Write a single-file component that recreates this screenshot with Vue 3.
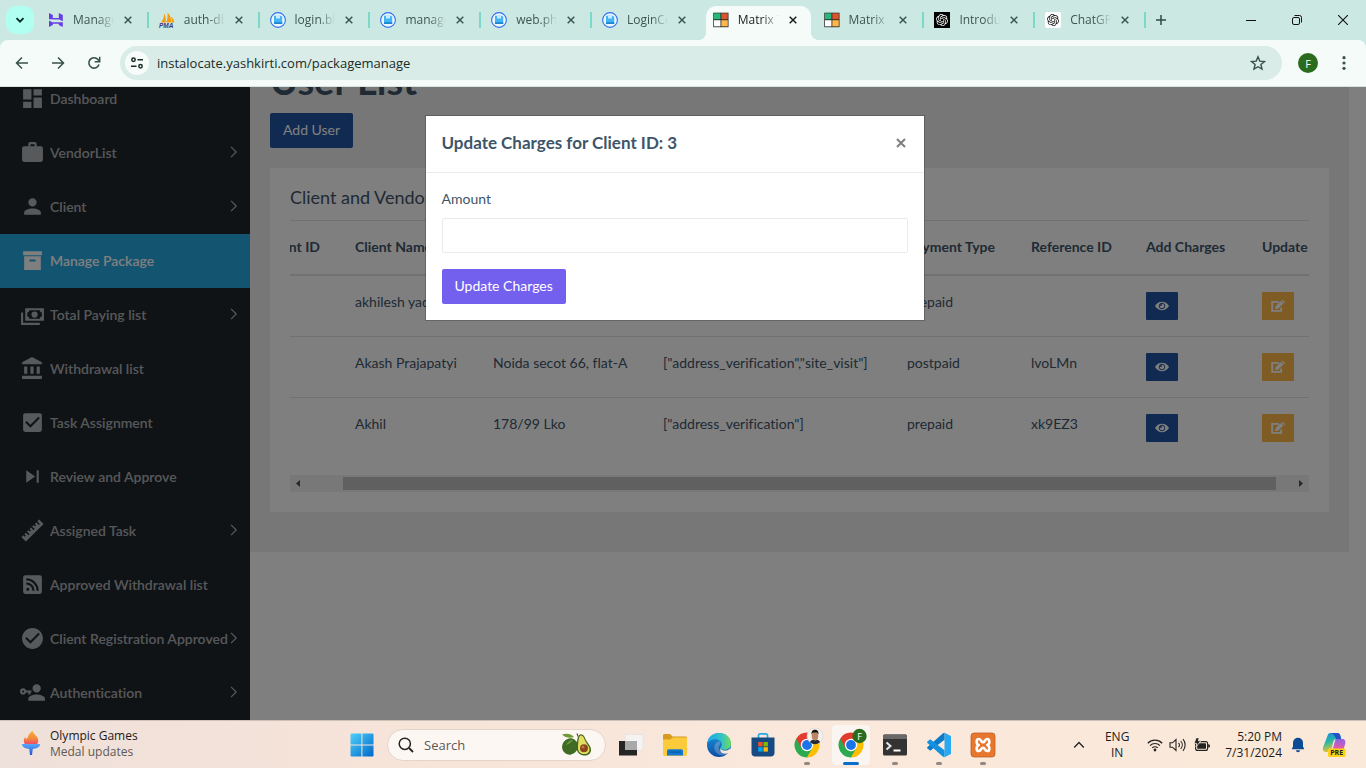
<script setup>
import { ref, onMounted } from 'vue'

const tabs = [
  { title: 'Manage Package', icon: 'hostinger' },
  { title: 'auth-db1 / localhost', icon: 'pma' },
  { title: 'login.blade.php', icon: 'disk' },
  { title: 'manage.blade.php', icon: 'disk' },
  { title: 'web.php - Files', icon: 'disk' },
  { title: 'LoginController', icon: 'disk' },
  { title: 'Matrix Template', icon: 'matrix', active: true },
  { title: 'Matrix Template', icon: 'matrix' },
  { title: 'Introduction', icon: 'openai-dark' },
  { title: 'ChatGPT', icon: 'openai' }
]

const menu = [
  { label: 'Dashboard', d: 'M13,3V9H21V3M13,21H21V11H13M3,21H11V15H3M3,13H11V3H3V13Z' },
  { label: 'VendorList', sub: true, d: 'M10,2H14A2,2 0 0,1 16,4V6H20A2,2 0 0,1 22,8V19A2,2 0 0,1 20,21H4C2.89,21 2,20.1 2,19V8C2,6.89 2.89,6 4,6H8V4C8,2.89 8.89,2 10,2M14,6V4H10V6H14Z' },
  { label: 'Client', sub: true, d: 'M12,4A4,4 0 0,1 16,8A4,4 0 0,1 12,12A4,4 0 0,1 8,8A4,4 0 0,1 12,4M12,14C16.42,14 20,15.79 20,18V20H4V18C4,15.79 7.58,14 12,14Z' },
  { label: 'Manage Package', active: true, d: 'M3,3H21V7H3V3M4,8H20V21H4V8M9.5,11A0.5,0.5 0 0,0 9,11.5V13H15V11.5A0.5,0.5 0 0,0 14.5,11H9.5Z' },
  { label: 'Total Paying list', sub: true, d: 'M5,6H23V18H5V6M14,9A3,3 0 0,1 17,12A3,3 0 0,1 14,15A3,3 0 0,1 11,12A3,3 0 0,1 14,9M9,8A2,2 0 0,1 7,10V14A2,2 0 0,1 9,16H19A2,2 0 0,1 21,14V10A2,2 0 0,1 19,8H9M1,10H3V20H19V22H1V10Z' },
  { label: 'Withdrawal list', d: 'M11.5,1L2,6V8H21V6M16,10V17H19V10M2,22H21V19H2M10,10V17H13V10M4,10V17H7V10H4Z' },
  { label: 'Task Assignment', d: 'M10,17L5,12L6.41,10.58L10,14.17L17.59,6.58L19,8M19,3H5C3.89,3 3,3.89 3,5V19A2,2 0 0,0 5,21H19A2,2 0 0,0 21,19V5C21,3.89 20.1,3 19,3Z' },
  { label: 'Review and Approve', d: 'M16,18H18V6H16M6,18L14.5,12L6,6V18Z' },
  { label: 'Assigned Task', sub: true, d: 'M1.39,18.36L3.16,16.6L4.58,18L5.64,16.95L4.22,15.54L5.64,14.12L8.11,16.6L9.17,15.54L6.7,13.06L8.11,11.65L9.53,13.06L10.59,12L9.17,10.59L10.59,9.17L13.06,11.65L14.12,10.59L11.65,8.11L13.06,6.7L14.47,8.11L15.54,7.05L14.12,5.64L15.54,4.22L18,6.7L19.07,5.64L16.6,3.16L18.36,1.39L22.61,5.64L5.64,22.61L1.39,18.36Z' },
  { label: 'Approved Withdrawal list', d: 'M5,3H19A2,2 0 0,1 21,5V19A2,2 0 0,1 19,21H5A2,2 0 0,1 3,19V5A2,2 0 0,1 5,3M7.5,15A1.5,1.5 0 0,0 6,16.5A1.5,1.5 0 0,0 7.5,18A1.5,1.5 0 0,0 9,16.5A1.5,1.5 0 0,0 7.5,15M6,10V12A6,6 0 0,1 12,18H14A8,8 0 0,0 6,10M6,6V8A10,10 0 0,1 16,18H18A12,12 0 0,0 6,6Z' },
  { label: 'Client Registration Approved', sub: true, d: 'M12 2C6.5 2 2 6.5 2 12S6.5 22 12 22 22 17.5 22 12 17.5 2 12 2M10 17L5 12L6.41 10.59L10 14.17L17.59 6.58L19 8L10 17Z' },
  { label: 'Authentication', sub: true, d: 'M11,10V12H10V14H8V12H5.83C5.42,13.17 4.31,14 3,14A3,3 0 0,1 0,11A3,3 0 0,1 3,8C4.31,8 5.42,8.83 5.83,10H11M3,10A1,1 0 0,0 2,11A1,1 0 0,0 3,12A1,1 0 0,0 4,11A1,1 0 0,0 3,10M16,14C18.67,14 24,15.34 24,18V20H8V18C8,15.34 13.33,14 16,14M16,12A4,4 0 0,1 12,8A4,4 0 0,1 16,4A4,4 0 0,1 20,8A4,4 0 0,1 16,12Z' }
]

const rows = [
  { id: '', name: 'akhilesh yadav', address: '', services: '', type: 'prepaid', reference: '' },
  { id: '', name: 'Akash Prajapatyi', address: 'Noida secot 66, flat-A', services: '["address_verification","site_visit"]', type: 'postpaid', reference: 'lvoLMn' },
  { id: '', name: 'Akhil', address: '178/99 Lko', services: '["address_verification"]', type: 'prepaid', reference: 'xk9EZ3' }
]

const knot = 'M22.2819 9.8211a5.9847 5.9847 0 0 0-.5157-4.9108 6.0462 6.0462 0 0 0-6.5098-2.9A6.0651 6.0651 0 0 0 4.9807 4.1818a5.9847 5.9847 0 0 0-3.9977 2.9 6.0462 6.0462 0 0 0 .7427 7.0966 5.98 5.98 0 0 0 .511 4.9107 6.051 6.051 0 0 0 6.5146 2.9001A5.9847 5.9847 0 0 0 13.2599 24a6.0557 6.0557 0 0 0 5.7718-4.2058 5.9894 5.9894 0 0 0 3.9977-2.9001 6.0557 6.0557 0 0 0-.7475-7.0729zm-9.022 12.6081a4.4755 4.4755 0 0 1-2.8764-1.0408l.1419-.0804 4.7783-2.7582a.7948.7948 0 0 0 .3927-.6813v-6.7369l2.02 1.1686a.071.071 0 0 1 .038.052v5.5826a4.504 4.504 0 0 1-4.4945 4.4944zm-9.6607-4.1254a4.4708 4.4708 0 0 1-.5346-3.0137l.142.0852 4.783 2.7582a.7712.7712 0 0 0 .7806 0l5.8428-3.3685v2.3324a.0804.0804 0 0 1-.0332.0615L9.74 19.9502a4.4992 4.4992 0 0 1-6.1408-1.6464zM2.3408 7.8956a4.485 4.485 0 0 1 2.3655-1.9728V11.6a.7664.7664 0 0 0 .3879.6765l5.8144 3.3543-2.0201 1.1685a.0757.0757 0 0 1-.071 0l-4.8303-2.7865A4.504 4.504 0 0 1 2.3408 7.872zm16.5963 3.8558L13.1038 8.364 15.1192 7.2a.0757.0757 0 0 1 .071 0l4.8303 2.7913a4.4944 4.4944 0 0 1-.6765 8.1042v-5.6772a.79.79 0 0 0-.407-.667zm2.0107-3.0231l-.142-.0852-4.7735-2.7818a.7759.7759 0 0 0-.7854 0L9.409 9.2297V6.8974a.0662.0662 0 0 1 .0284-.0615l4.8303-2.7866a4.4992 4.4992 0 0 1 6.6802 4.66zM8.3065 12.863l-2.02-1.1638a.0804.0804 0 0 1-.038-.0567V6.0742a4.4992 4.4992 0 0 1 7.3757-3.4537l-.142.0805L8.704 5.459a.7948.7948 0 0 0-.3927.6813zm1.0976-2.3654l2.602-1.4998 2.6069 1.4998v2.9994l-2.5974 1.4997-2.6067-1.4997Z'

const amount = ref('')
const scroller = ref(null)
onMounted(() => { scroller.value.scrollLeft = 41 })
</script>

<template>
  <div class="desktop">
    <header class="browser">
      <div class="tabstrip">
        <button class="tab-search" aria-label="Search tabs">
          <svg width="12" height="12" viewBox="0 0 12 12"><path d="M2.5 4.2 6 7.7l3.5-3.5" fill="none" stroke="#0c2b25" stroke-width="1.9" /></svg>
        </button>
        <div class="tabs">
          <div v-for="(t, i) in tabs" :key="i" class="tab" :class="{ active: t.active, plain: i === 5 }">
            <svg class="fav" width="16" height="16" viewBox="0 0 16 16">
              <path v-if="t.icon === 'hostinger'" fill="#673de6" d="M1 7.200V1l3.800 2v3h6V1L14.800 3v6.200L11.500 7.400zM1 15V8.400l3.300 1.900h10.500V15L10.800 13v-1.200h-6V13z" />
              <g v-else-if="t.icon === 'pma'">
                <path fill="#f89c0e" d="M2 10.500C4 8 5 5 5.200 1.500c1.500 3 1.900 6 1.500 9zM7.200 10.500C8.500 7 8.800 4 8.500.500c3 3 4 6.500 3.500 10zM12.500 10.500c.4-2 .3-4-.3-6 2 1.800 3 4 3 6z" />
                <text x="0" y="15.700" font-size="6.500" font-weight="700" font-style="italic" font-family="Liberation Sans, sans-serif" fill="#3c3a7c">PMA</text>
              </g>
              <g v-else-if="t.icon === 'disk'">
                <circle cx="8" cy="8" r="7.400" fill="#eef6ff" stroke="#2f6fed" stroke-width="1.100" />
                <path fill="#43b5f5" d="M4 3.800h7l1.200 1.200v7H4z" /><path fill="#c9ebff" d="M6 3.800h4v2.700H6z" /><path fill="#1d86d1" d="M4 10.200h8.200V12H4z" />
              </g>
              <g v-else-if="t.icon === 'matrix'">
                <path fill="#222" d="M.3.700h15.200v14.500H.3z" /><path fill="#27b779" d="M1 1.300h6.500v6H1z" /><path fill="#da542e" d="M8.300 1.300h6.500v6H8.300z" /><path fill="#fff" d="M1 8.200h6.500v6.200H1z" /><path fill="#ffb848" d="M8.300 8.200h6.500v6.200H8.300z" />
              </g>
              <g v-else>
                <rect width="16" height="16" :rx="t.icon === 'openai' ? 2 : 0" :fill="t.icon === 'openai' ? '#fff' : '#000'" />
                <path transform="translate(2 2) scale(.5)" :d="knot" :fill="t.icon === 'openai' ? '#111' : '#fff'" />
              </g>
            </svg>
            <span class="tab-title">{{ t.title }}</span>
            <button class="tab-close" :aria-label="'Close ' + t.title">
              <svg width="8" height="8" viewBox="0 0 8 8"><path d="m.7.700 6.600 6.600M7.300.700.700 7.300" fill="none" stroke="currentColor" stroke-width="1.500" /></svg>
            </button>
          </div>
        </div>
        <button class="new-tab" aria-label="New tab">
          <svg width="10" height="10" viewBox="0 0 10 10"><path d="M5 0v10M0 5h10" stroke="#2f4a44" stroke-width="1.500" /></svg>
        </button>
        <div class="window-controls">
          <button aria-label="Minimize"><svg width="10" height="10" viewBox="0 0 10 10"><path d="M0 5.500h10" stroke="#111" /></svg></button>
          <button aria-label="Restore"><svg width="10" height="10" viewBox="0 0 10 10"><rect x=".5" y="2.500" width="7" height="7" rx="1.500" fill="none" stroke="#111" /><path d="M2.500.500h5a2 2 0 0 1 2 2v5" fill="none" stroke="#111" /></svg></button>
          <button aria-label="Close"><svg width="10" height="10" viewBox="0 0 10 10"><path d="m0 0 10 10M10 0 0 10" stroke="#111" stroke-width="1.100" /></svg></button>
        </div>
      </div>
      <div class="toolbar">
        <button class="nav-btn" aria-label="Back"><svg width="14" height="14" viewBox="0 0 14 14"><path d="M13 7H2M7 1.500 1.500 7 7 12.500" fill="none" stroke="#38504b" stroke-width="1.500" /></svg></button>
        <button class="nav-btn" aria-label="Forward"><svg width="14" height="14" viewBox="0 0 14 14"><path d="M1 7h11M7 1.500 12.500 7 7 12.500" fill="none" stroke="#38504b" stroke-width="1.500" /></svg></button>
        <button class="nav-btn" aria-label="Reload"><svg width="14" height="14" viewBox="0 0 14 14"><path d="M12 8.500A5.200 5.200 0 1 1 11 3.500L12.300 5" fill="none" stroke="#38504b" stroke-width="1.600" /><path d="M12.700.800v5h-5" fill="none" stroke="#38504b" stroke-width="1.500" /></svg></button>
        <div class="omnibox">
          <button class="site-info" aria-label="Site information">
            <svg width="14" height="14" viewBox="0 0 14 14" fill="none" stroke="#1c2d29" stroke-width="1.500"><circle cx="3.500" cy="3.800" r="1.700" /><path d="M7.500 3.800H13M1 10.200h5.500" /><circle cx="10.500" cy="10.200" r="1.700" /></svg>
          </button>
          <input class="url" aria-label="Address" value="instalocate.yashkirti.com/packagemanage" />
          <button class="star" aria-label="Bookmark this tab">
            <svg width="16" height="16" viewBox="0 0 16 16"><path d="m8 1.800 1.800 4.300 4.700.4-3.600 3 1.100 4.600L8 11.700l-4 2.400 1.100-4.600-3.600-3 4.700-.4z" fill="none" stroke="#38504b" stroke-width="1.400" /></svg>
          </button>
        </div>
        <button class="avatar" aria-label="Profile">F</button>
        <button class="dots" aria-label="Menu"><svg width="4" height="14" viewBox="0 0 4 14" fill="#38504b"><circle cx="2" cy="1.700" r="1.600" /><circle cx="2" cy="7" r="1.600" /><circle cx="2" cy="12.300" r="1.600" /></svg></button>
      </div>
    </header>

    <div class="viewport">
      <div class="page">
        <nav class="sidebar">
          <a v-for="m in menu" :key="m.label" href="#" class="menu-item" :class="{ active: m.active }">
            <svg width="25" height="25" viewBox="0 0 24 24"><path :d="m.d" fill="currentColor" fill-rule="evenodd" /></svg>
            <span>{{ m.label }}</span>
            <svg v-if="m.sub" class="chev" width="8" height="12" viewBox="0 0 8 12"><path d="m1 .800 5.200 5.200L1 11.200" fill="none" stroke="currentColor" stroke-width="1.200" /></svg>
          </a>
        </nav>
        <main class="content">
          <h1>User List</h1>
          <button class="btn navy">Add User</button>
          <section class="card">
            <h2>Client and Vendor List</h2>
            <div ref="scroller" class="scroller">
              <table>
                <colgroup><col class="c-id" /><col class="c-name" /><col class="c-addr" /><col class="c-serv" /><col class="c-type" /><col class="c-ref" /><col class="c-add" /><col class="c-upd" /></colgroup>
                <thead>
                  <tr><th>Client ID</th><th>Client Name</th><th>Address</th><th>Services</th><th>Payment Type</th><th>Reference ID</th><th>Add Charges</th><th>Update</th></tr>
                </thead>
                <tbody>
                  <tr v-for="(r, i) in rows" :key="i">
                    <td>{{ r.id }}</td><td>{{ r.name }}</td><td>{{ r.address }}</td><td>{{ r.services }}</td><td>{{ r.type }}</td><td>{{ r.reference }}</td>
                    <td>
                      <button class="btn-sm blue" aria-label="View charges">
                        <svg width="14" height="12" viewBox="0 0 14 12"><path d="M0 6c1.600-2.700 4-4.200 7-4.200S12.400 3.300 14 6c-1.600 2.700-4 4.200-7 4.200S1.600 8.700 0 6z" fill="#fff" /><circle cx="7" cy="6" r="2.800" fill="none" stroke="#2255a4" stroke-width="1" /><circle cx="6" cy="5" r="1" fill="#2255a4" /></svg>
                      </button>
                    </td>
                    <td>
                      <button class="btn-sm amber" aria-label="Update">
                        <svg width="14" height="12" viewBox="0 0 14 12"><path d="M8 1.900H1.200v9h9V7.500" fill="none" stroke="#fff" stroke-width="1.900" /><path d="m4.500 6.200 5.300-5.300 2.600 2.500-5.300 5.400-2.900.3zM10.500.300l.8-.3h.6L13.900 1.900v.7l-.9.700z" fill="#fff" /></svg>
                      </button>
                    </td>
                  </tr>
                </tbody>
              </table>
            </div>
            <div class="hbar">
              <svg width="17" height="17" viewBox="0 0 17 17"><path d="M10 5v7L6 8.500z" fill="#505050" /></svg>
              <div class="track"><div class="thumb"></div></div>
              <svg width="17" height="17" viewBox="0 0 17 17"><path d="M7 5v7l4-3.500z" fill="#505050" /></svg>
            </div>
          </section>
        </main>
      </div>

      <div class="backdrop">
        <form class="modal" role="dialog" aria-labelledby="modal-title" @submit.prevent>
          <div class="modal-head">
            <h5 id="modal-title">Update Charges for Client ID: 3</h5>
            <button type="button" class="close" aria-label="Close"><svg width="10" height="10" viewBox="0 0 10 10"><path d="m1 1 8 8M9 1 1 9" stroke="#000" stroke-width="2" /></svg></button>
          </div>
          <div class="modal-body">
            <label for="amount">Amount</label>
            <input id="amount" v-model="amount" type="text" />
            <button class="btn violet">Update Charges</button>
          </div>
        </form>
      </div>
    </div>

    <footer class="taskbar">
      <button class="widget">
        <svg width="20" height="28" viewBox="0 0 20 28">
          <defs>
            <linearGradient id="fl" x1="0" y1="0" x2="0" y2="1"><stop offset="0" stop-color="#f6b02c" /><stop offset=".55" stop-color="#f58a3c" /><stop offset="1" stop-color="#ea4a6b" /></linearGradient>
            <linearGradient id="tb" x1="0" y1="0" x2="0" y2="1"><stop offset="0" stop-color="#5aa9f8" /><stop offset="1" stop-color="#2456d6" /></linearGradient>
          </defs>
          <path d="M11.500.800c.7 3.700 6.200 5.700 5.800 10.200-.1 1.500-.8 2.700-1.600 3.500H4.200C2.700 12.500 2 9.500 4.300 7c.3 1.300 1 1.900 1.800 2C7 6 8 3.500 11.500.800z" fill="url(#fl)" />
          <path d="M.8 14h18.400c0 2.500-2.500 4-5 4.600l-2.400.4-.8 6h-2l-.8-6-2.400-.4C3.300 18 .8 16.500.8 14z" fill="url(#tb)" />
        </svg>
        <span class="widget-text"><span>Olympic Games</span><span class="muted">Medal updates</span></span>
      </button>

      <div class="apps">
        <button class="app" aria-label="Start">
          <svg width="24" height="24" viewBox="0 0 24 24"><defs><linearGradient id="wn" x1="0" y1="0" x2="1" y2="1"><stop offset="0" stop-color="#4fd0fb" /><stop offset="1" stop-color="#0067c9" /></linearGradient></defs><path d="M1.500.500h9.900v11H.500v-10a1 1 0 0 1 1-1zM12.400.500h10.100a1 1 0 0 1 1 1v10H12.400zM.5 12.500h10.900v11H1.500a1 1 0 0 1-1-1zM12.400 12.500h11.100v10a1 1 0 0 1-1 1H12.400z" fill="url(#wn)" /></svg>
        </button>
        <div class="search">
          <svg width="16" height="16" viewBox="0 0 16 16"><circle cx="6.800" cy="6.800" r="5.600" fill="none" stroke="#222" stroke-width="1.500" /><path d="m11 11 4 4" stroke="#222" stroke-width="1.800" /></svg>
          <input type="search" aria-label="Search" placeholder="Search" />
          <svg width="31" height="24" viewBox="0 0 31 24">
            <path d="M1 1.500c5-1.500 9-.5 12 2.500-4 1.500-8.500 1-12-2.500z" fill="#6f9a35" />
            <ellipse cx="9" cy="13.500" rx="7.800" ry="8.300" transform="rotate(35 9 13.500)" fill="#3f6b25" /><path d="M5 12c1-3 4-5 7-5-2 3-4 4-7 5z" fill="#6a9843" />
            <path d="M19 1.500c3-.8 4.500 2 5.700 5 1.500 3.800 5.500 6 5.300 10.500-.2 4-3.500 5.800-7 5.500-4.500-.3-7.500-3.500-7.300-8 .2-5 .5-12 3.300-13z" fill="#41661e" />
            <path d="M19.500 2.600c2.500-.6 3.300 2 4.400 4.700 1.500 3.700 4.700 5.800 4.600 9.400-.2 3.200-2.700 4.600-5.500 4.400-3.800-.3-6.200-2.900-6-6.700.2-4 .5-11 2.500-11.800z" fill="#e3dd62" />
            <circle cx="23" cy="15.200" r="4" fill="#8a451d" /><circle cx="22" cy="14" r="1.500" fill="#bd7740" /><path d="M17 3.500 16 .5" stroke="#6b5227" stroke-width="1.200" />
          </svg>
        </div>
        <button class="app" aria-label="Task view">
          <svg width="26" height="24" viewBox="0 0 26 24"><path d="M7 1.500h18V17H7z" fill="#f5f3f2" stroke="#ddd" stroke-width=".5" /><path d="M1 8h18v14.500H1z" fill="#252525" /><path d="M7 8h12v9H7z" fill="#a9a9a9" /></svg>
        </button>
        <button class="app" aria-label="File Explorer">
          <svg width="26" height="24" viewBox="0 0 26 24"><path d="M1 2.500C1 1.700 1.700 1 2.500 1H8l2.500 2.500h13c.8 0 1.500.700 1.500 1.500v6H1z" fill="#d69a1e" /><path d="M10.500 4.500h13c.8 0 1.500.5 1.500 1.500v15.500c0 .8-.7 1.500-1.500 1.500h-21C1.700 23 1 22.300 1 21.500V6.500h7.500z" fill="#fccb3c" /><path d="M5 22.500V18c0-1 .7-1.700 1.700-1.700h12.600c1 0 1.700.7 1.700 1.700v4.500z" fill="#1377d2" /><path d="M7.500 18.500h11v1.200h-11z" fill="#0a56a5" /></svg>
        </button>
        <button class="app" aria-label="Edge">
          <svg width="26" height="26" viewBox="0 0 26 26">
            <defs><linearGradient id="e1" x1="0" y1=".3" x2="1" y2=".3"><stop offset="0" stop-color="#1ca9e6" /><stop offset=".6" stop-color="#35c1c9" /><stop offset="1" stop-color="#6fde55" /></linearGradient><linearGradient id="e2" x1="0" y1="0" x2="0" y2="1"><stop offset="0" stop-color="#1b93dc" /><stop offset="1" stop-color="#0c4fa5" /></linearGradient></defs>
            <circle cx="13" cy="13" r="12" fill="url(#e2)" />
            <path d="M1.200 11.500C2 5 7 1 13.200 1 20.500 1 25 6 25 11.500c0 4-3 6.300-6.600 6.300-2.300 0-4-.8-4-1.800 0-.8 1.300-1.200 1.300-3.400C15.700 9.700 13 7.300 9.500 7.300c-4 0-7 2-8.300 4.200z" fill="url(#e1)" />
            <path d="M13.500 9.200c-3 .3-5.200 3-5.200 6.300 0 5 4.700 8.700 10 7.500l4-3c1-.8.200-1.300-.6-1-3.500 1.500-7.700.4-8.800-2-.9-2 .4-3 1.200-4.400.5-1 .6-2.500-.6-3.400z" fill="#f9e8dd" opacity=".25" />
            <path d="M14.500 16.200c.8 3 7 3.300 9.300.2l1.500 3.300-2.300 1c-4 2.200-10 .5-8.500-4.500z" fill="#f9e6da" />
          </svg>
        </button>
        <button class="app" aria-label="Store">
          <svg width="24" height="26" viewBox="0 0 24 26"><path d="M7.500 6V3.500c0-1 .7-1.700 1.700-1.700h5.600c1 0 1.700.7 1.700 1.700V6" fill="none" stroke="#2ba7e3" stroke-width="1.700" /><path d="M.5 5.500h23V21c0 2-1.500 3.500-3.500 3.500H4C2 24.500.5 23 .5 21z" fill="#174a80" /><path d="M7.200 10h4.400v4.400H7.200z" fill="#f25022" /><path d="M12.500 10h4.400v4.400h-4.400z" fill="#7fba00" /><path d="M7.200 15.200h4.400v4.400H7.200z" fill="#00a4ef" /><path d="M12.500 15.200h4.400v4.400h-4.400z" fill="#ffb900" /></svg>
        </button>
        <button v-for="n in 2" :key="n" class="app" :class="n === 2 ? 'current' : 'open'" aria-label="Chrome">
          <svg class="chrome" width="34" height="34" viewBox="0 0 34 34">
            <path d="M17 17 6.200 10.800A12.400 12.400 0 0 1 27.800 10.800z" fill="#e33b2e" /><path d="M17 17V29.400A12.400 12.400 0 0 1 6.200 10.800z" fill="#2da94f" /><path d="M17 17 27.800 10.800A12.400 12.400 0 0 1 17 29.400z" fill="#fdbd00" />
            <path d="M17 10.800h10.800L22.500 20 17 17z" fill="#fdbd00" /><path d="m11.700 20.200-5.500-9.400L17 10.800V17z" fill="#e33b2e" /><path d="m22.400 20.200-5.400 9.200-5.300-9.200L17 17z" fill="#2da94f" /><path d="M22.400 20.200 17 29.400l5-.9 4-3.500V17z" fill="#fdbd00" />
            <circle cx="17" cy="17" r="6.200" fill="#fff" /><circle cx="17" cy="17" r="4.900" fill="#1a73e8" />
            <g v-if="n === 1"><circle cx="25" cy="8" r="8" fill="#f4f0ec" stroke="#d8cdc6" stroke-width=".5" /><path d="M20 14.300c.5-1.800 2-2.800 5-2.800s4.500 1 5 2.800a8 8 0 0 1-10 0z" fill="#252a33" /><ellipse cx="25" cy="7.800" rx="3.300" ry="4.700" fill="#b98565" /><path d="M21.500 6.500c-.3-3.500 1.500-4.800 3.500-4.800s3.800 1.300 3.500 4.800c-.7-1.700-1-2-3.500-2s-2.800.3-3.500 2z" fill="#17130f" /></g>
            <g v-else><circle cx="25.500" cy="8" r="7.200" fill="#2b6b1e" /><text x="25.500" y="11.500" text-anchor="middle" font-size="9" font-family="Open Sans, sans-serif" fill="#fff">F</text></g>
          </svg>
        </button>
        <button class="app open" aria-label="Terminal">
          <svg width="26" height="22" viewBox="0 0 26 22"><rect x="1" y=".5" width="24" height="21" rx="1.500" fill="#333" /><path d="M1 2A1.500 1.500 0 0 1 2.500.500h21A1.500 1.500 0 0 1 25 2v3H1z" fill="#686868" /><path d="m4.500 8.500 4 3.500-4 3.500" fill="none" stroke="#e6e6e6" stroke-width="2" /><path d="M11.500 16.500h7" stroke="#fff" stroke-width="2" /></svg>
        </button>
        <button class="app open" aria-label="Code">
          <svg width="26" height="26" viewBox="0 0 26 26"><path d="M18.500.8 24 3.400c.7.3 1 .8 1 1.500v16.200c0 .7-.3 1.200-1 1.500l-5.500 2.600z" fill="#29a9f2" /><path d="M18.500.8v7L4.200 18.700 1.500 16.500c-.6-.5-.6-1 0-1.500L17 1.300z" fill="#0a7cc9" /><path d="M18.500 25.200v-7L4.200 7.300 1.500 9.500c-.6.5-.6 1 0 1.500L17 24.700z" fill="#1491de" /></svg>
        </button>
        <button class="app open" aria-label="XAMPP">
          <svg width="26" height="26" viewBox="0 0 26 26"><rect x="1" y="1" width="24" height="24" rx="3" fill="#e8772e" stroke="#b8571b" stroke-width=".7" /><path d="M8.700 7C6 7 6 12 8.700 13 6 14 6 19 8.700 19c3 0 2-3.300 4.300-3.300s1.300 3.300 4.300 3.300c2.700 0 2.700-5 0-6 2.700-1 2.700-6 0-6-3 0-2 3.300-4.300 3.300S11.700 7 8.700 7z" fill="none" stroke="#fff" stroke-width="2.600" stroke-linejoin="round" /></svg>
        </button>
      </div>

      <div class="tray">
        <button class="caret" aria-label="Show hidden icons"><svg width="12" height="8" viewBox="0 0 12 8"><path d="m1.200 6.500 4.800-5 4.800 5" fill="none" stroke="#222" stroke-width="1.300" /></svg></button>
        <button class="lang"><span>ENG</span><span>IN</span></button>
        <button class="quick" aria-label="Network, sound and battery">
          <svg width="16" height="14" viewBox="0 0 16 14" fill="none" stroke="#222" stroke-width="1.200"><path d="M.8 5.200a10.200 10.200 0 0 1 14.400 0M3 7.600a7 7 0 0 1 10 0M5.200 9.900a4 4 0 0 1 5.600 0" /><circle cx="8" cy="12" r=".8" fill="#222" /></svg>
          <svg width="18" height="14" viewBox="0 0 18 14" fill="none" stroke="#222" stroke-width="1.100"><path d="M1 4.800h2.500L7 1.500v11L3.500 9.200H1z" /><path d="M9.500 4.800a3 3 0 0 1 0 4.400M11.700 3a6 6 0 0 1 0 8M14 1.200a9 9 0 0 1 0 11.600" /></svg>
          <svg width="18" height="14" viewBox="0 0 18 14"><rect x="2.600" y="3.600" width="12" height="8.800" rx="2" fill="none" stroke="#222" stroke-width="1.100" /><rect x="4.200" y="5.200" width="8.800" height="5.600" rx=".6" fill="#222" /><path d="M15.200 6.300c1.300 0 1.800.5 1.800 1.700s-.5 1.700-1.800 1.700z" fill="#222" /><path d="M3.200-.200h3L5.300 2.800h2.500L3 9l.7-3.600H1z" fill="#222" stroke="#fae8dc" stroke-width=".8" /></svg>
        </button>
        <button class="clock"><span>5:20 PM</span><span>7/31/2024</span></button>
        <button class="bell" aria-label="Notifications"><svg width="14" height="16" viewBox="0 0 14 16"><path d="M7 .800a5 5 0 0 1 5 5v3.700l1.300 2.800H.7L2 9.500V5.800a5 5 0 0 1 5-5zM5 13.300h4a2 2 0 0 1-4 0z" fill="#0b4a94" /></svg></button>
        <button class="copilot" aria-label="Copilot">
          <svg width="24" height="26" viewBox="0 0 24 26">
            <defs><linearGradient id="c1" x1="0" y1="0" x2=".3" y2="1"><stop offset="0" stop-color="#1787e5" /><stop offset=".5" stop-color="#27b8a5" /><stop offset="1" stop-color="#f0c32c" /></linearGradient><linearGradient id="c2" x1=".5" y1="0" x2=".5" y2="1"><stop offset="0" stop-color="#8c62e8" /><stop offset=".6" stop-color="#e25ba9" /><stop offset="1" stop-color="#f48b5a" /></linearGradient></defs>
            <path d="M6 2.500C6.500 1.500 7.500 1 8.500 1h7c1.500 0 2.300 1 2.800 2.500l.9 3.500h-5c-1.500 0-2.300 1-2.800 2.500l-2 8c-.5 1.500-1.400 2.500-2.900 2.500H4c-2.500 0-3.600-2-3-4.500z" fill="url(#c1)" />
            <path d="M13.500 7h6.800c2.500 0 3.500 2 3 4.500L21 19c-.7 2-2 3-3.500 3H8c1 0 1.700-1 2-2l2.500-9.500z" fill="url(#c2)" /><path d="M9 1h6.500c1.500 0 2.300 1 2.800 2.500l.9 3.500h-5L12 3z" fill="#2252c9" />
            <rect x="6" y="16.500" width="17.500" height="8.500" rx="1.500" fill="#fdd116" /><text x="14.700" y="23.400" text-anchor="middle" font-size="7" font-weight="700" font-family="Open Sans, sans-serif" fill="#222">PRE</text>
          </svg>
        </button>
      </div>
    </footer>
  </div>
</template>

<style>
html, body { margin: 0; background: #fff; }
</style>

<style scoped>
* { box-sizing: border-box; }
button { border: 0; background: none; padding: 0; margin: 0; font: inherit; color: inherit; display: flex; align-items: center; justify-content: center; }
input { font: inherit; color: inherit; border: 0; background: none; outline: none; padding: 0; min-width: 0; }
svg { flex: none; display: block; }
.desktop { height: 100vh; min-height: 480px; display: flex; flex-direction: column; overflow: hidden; font-family: "Open Sans", "Noto Sans", sans-serif; font-size: 12px; }

/* browser frame */
.browser { flex: none; background: #cce8e2; }
.tabstrip { display: flex; height: 40px; align-items: stretch; }
.tab-search { flex: none; width: 28px; height: 28px; margin: 6px 3px 0 6px; border-radius: 10px; background: #b1fff1; }
.tabs { display: flex; flex: 0 1 1108px; min-width: 0; }
.tab { position: relative; flex: 1 1 0; min-width: 0; display: flex; align-items: center; padding: 0 12px 0 11px; color: #3d5550; }
.tab::after { content: ""; position: absolute; right: -1px; top: 12px; width: 2px; height: 16px; background: #7ad9c8; }
.tab.plain::after { display: none; }
.tab.active { color: #16211f; }
.tab.active::before { content: ""; position: absolute; left: 4px; right: 2px; top: 6px; bottom: 0; border-radius: 10px 10px 0 0; background: #f4fbf9; }
.tab.active::after { left: -4px; right: -6px; top: auto; bottom: 0; width: auto; height: 8px; background: radial-gradient(circle at 0 0, transparent 8px, #f4fbf9 8px) 0 0 / 8px 8px no-repeat, radial-gradient(circle at 8px 0, transparent 8px, #f4fbf9 8px) 100% 0 / 8px 8px no-repeat; }
.fav { position: relative; z-index: 1; overflow: visible; }
.tab-title { position: relative; z-index: 1; flex: 1; min-width: 0; margin-left: 9px; overflow: hidden; white-space: nowrap; line-height: 18px; mask-image: linear-gradient(to right, #000 60%, transparent 100%); }
.tab-close { position: relative; z-index: 1; flex: none; width: 16px; height: 16px; margin-left: 6px; }
.new-tab { width: 28px; margin-left: 2px; }
.window-controls { display: flex; margin-left: auto; }
.window-controls button { width: 46px; }
.toolbar { display: flex; align-items: center; height: 47px; padding: 0 8px 0 4px; background: #f4fbf9; border-radius: 8px 8px 0 0; border-bottom: 1px solid #d5e3df; }
.nav-btn { flex: none; width: 36px; height: 34px; }
.omnibox { flex: 1; min-width: 0; display: flex; align-items: center; height: 34px; margin-left: 8px; padding: 0 16px 0 5px; border-radius: 17px; background: #d9ece7; }
.site-info { flex: none; width: 24px; height: 24px; border-radius: 50%; background: #f7fcfb; }
.url { flex: 1; margin-left: 8px; font-size: 13px; color: #1b2c28; }
.avatar { flex: none; width: 20px; height: 20px; margin-left: 16px; border-radius: 50%; background: #2b6b1e; color: #fff; font-size: 11px; }
.dots { flex: none; width: 28px; height: 28px; margin-left: 12px; }

/* web page */
.viewport { position: relative; flex: 1; min-height: 0; overflow: hidden; background: #fff; font-family: "Lato", "Noto Sans", sans-serif; font-size: 14px; line-height: 21px; font-variant-ligatures: none; color: #3e5569; }
.page { display: flex; align-items: flex-start; margin-top: -15px; padding-right: 17px; }
.sidebar { flex: none; width: 250px; background: #1f262d; }
.menu-item { position: relative; display: flex; align-items: center; gap: 5px; height: 54px; padding: 0 0 2px 20px; color: rgba(255, 255, 255, .65); text-decoration: none; font-weight: 600; white-space: nowrap; }
.menu-item.active { background: #27a9e3; color: #fff; }
.chev { position: absolute; right: 12px; top: 20px; }
.content { flex: 1; min-width: 0; padding: 0 20px 40px; background: #eee; }
h1 { margin: -15px 0 10px; font-size: 38px; line-height: 46px; font-weight: 700; }
.btn { height: 35px; padding: 0 13px 2px; border-radius: 2px; color: #fff; font-size: 14px; white-space: nowrap; }
.navy { background: #2255a4; }
.violet { background: #7460ee; }
.card { margin-top: 20px; padding: 18px 20px 20px; background: #fff; }
h2 { margin: 0 0 12px; font-size: 18px; line-height: 22px; font-weight: 400; }
.scroller { overflow: hidden; padding-bottom: 17px; }
table { width: 1076px; table-layout: fixed; border-collapse: collapse; white-space: nowrap; }
.c-id { width: 90px; } .c-name { width: 138px; } .c-addr { width: 170px; } .c-serv { width: 244px; }
.c-type { width: 124px; } .c-ref { width: 115px; } .c-add { width: 116px; } .c-upd { width: 79px; }
th { padding: 15px 16px 17px; text-align: left; font-weight: 700; border-top: 1px solid #dee2e6; border-bottom: 2px solid #dee2e6; }
td { padding: 16px; vertical-align: top; line-height: 20px; font-weight: 400; border-top: 1px solid #dee2e6; }
.btn-sm { width: 32px; height: 28px; border-radius: 1px; }
.blue { background: #2255a4; }
.amber { background: #ffb848; }
.hbar { display: flex; align-items: center; height: 17px; background: #f1f1f1; }
.track { flex: 1; padding: 0 16px 0 36px; }
.thumb { height: 13px; background: #c1c1c1; }

/* dialog */
.backdrop { position: absolute; inset: 0; padding: 28px 17px 0 0; background: rgba(0, 0, 0, .5); }
.modal { width: min(500px, 90%); margin: 0 auto; background: #fff; background-clip: padding-box; border: 1px solid rgba(0, 0, 0, .2); }
.modal-head { display: flex; align-items: flex-start; justify-content: space-between; padding: 15px 16px 17px; border-bottom: 1px solid #e9ecef; }
h5 { margin: 0; font-size: 17px; line-height: 24px; font-weight: 700; }
.close { width: 14px; height: 24px; opacity: .5; }
.modal-body { padding: 15px 16px 16px; }
.modal-body label { display: block; margin-bottom: 9px; }
.modal-body input { display: block; width: 100%; height: 35px; margin-bottom: 16px; padding: 6px 12px; border: 1px solid #e9ecef; border-radius: 2px; }

/* taskbar */
.taskbar { flex: none; display: flex; height: 48px; align-items: center; background: linear-gradient(90deg, #eee0da, #f7e4d9 30%, #fae8dc 60%, #fae9d8); border-top: 1px solid #cdc1ba; color: #1c1c1c; }
.widget { flex: 0 0 340px; justify-content: flex-start; padding: 0 0 2px 21px; gap: 9px; text-align: left; }
.widget-text, .lang, .clock { display: flex; flex-direction: column; line-height: 16px; }
.muted { color: #5f5955; }
.apps { flex: none; display: flex; align-items: center; }
.app { position: relative; width: 44px; height: 40px; }
.app.current::before { content: ""; position: absolute; inset: 0 3px; border-radius: 4px; background: #fbf5f1; }
.app.open::after, .app.current::after { content: ""; position: absolute; left: 19px; bottom: 0; width: 6px; height: 3px; border-radius: 2px; background: #918883; }
.app.current::after { left: 14px; width: 16px; background: #0a6fc9; }
.chrome { position: relative; }
.search { display: flex; align-items: center; width: 219px; height: 32px; margin: 0 3px; padding: 0 13px 0 10px; border-radius: 16px; background: #fdf7f4; border: 1px solid #e3d5cc; }
.search input { flex: 1; margin-left: 10px; font-size: 13px; }
.search input::placeholder { color: #5c5753; opacity: 1; }
.tray { display: flex; align-items: center; margin-left: auto; padding-right: 20px; white-space: nowrap; }
.lang { margin-left: 20px; width: 24px; }
.quick { margin-left: 18px; gap: 6px; }
.clock { margin-left: 14px; align-items: flex-end; }
.bell { margin-left: 9px; }
.copilot { margin-left: 17px; }
</style>
